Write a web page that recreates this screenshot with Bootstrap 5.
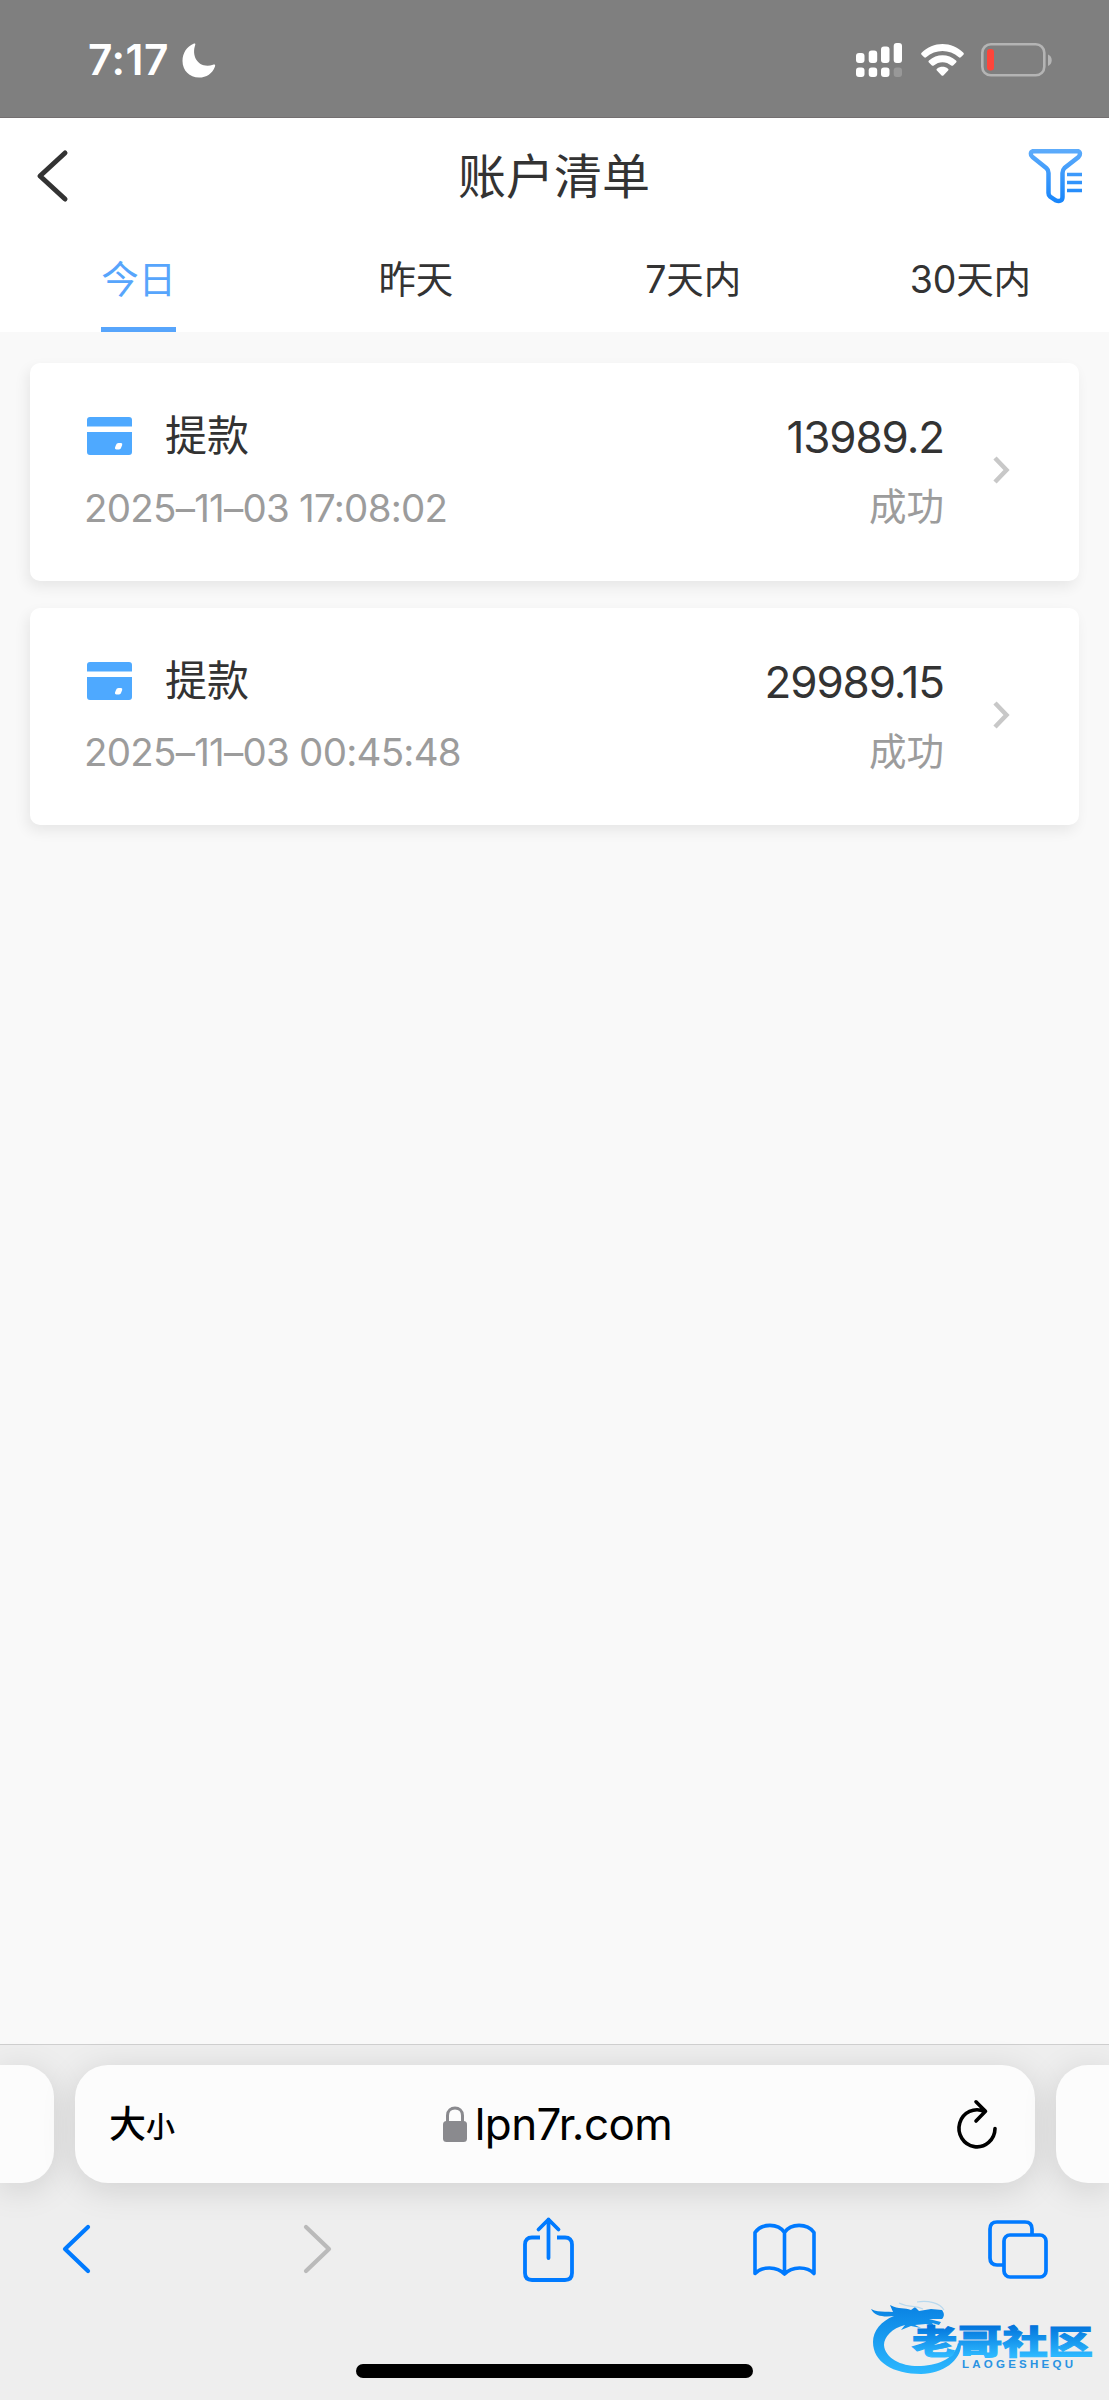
<!DOCTYPE html>
<html lang="zh-CN">
<head>
  <meta charset="utf-8">
  <title>账户清单</title>
  <link href="https://cdn.jsdelivr.net/npm/bootstrap@5.3.3/dist/css/bootstrap.min.css" rel="stylesheet">
  <style>
    body {
      height: 2400px;
      overflow: hidden;
      background: #f9f9f9;
      color: #333;
      font-family: Inter, "Noto Sans CJK SC", sans-serif;
      line-height: 1;
    }
    svg { display: block; flex-shrink: 0; overflow: visible; }

    /* 狀態列 */
    .status-bar { height: 118px; background: #7f7f7f; border-bottom: 1px solid #736f70; padding: 3px 57px 0 88px; }
    .clock { font-size: 42.5px; font-weight: 600; letter-spacing: 0.5px; padding-top: 1px; }
    .moon { margin-left: 13px; }

    /* 標題與頁籤 */
    .title-bar { height: 116px; padding: 0 27px 0 37px; }
    .title-text { font-size: 48px; padding: 1px 0 0 11px; }
    .day-tabs { height: 98px; font-size: 37.5px; }
    .day-tabs .nav-link { padding: 0; color: #333; height: 98px; letter-spacing: -0.2px; }
    .day-tabs .nav-link.active { color: #57a5fc; }
    .day-tabs .nav-link span { height: 98px; line-height: 91px; border-bottom: 5px solid transparent; }
    .day-tabs .nav-link.active span { border-color: #57a5fc; }

    /* 紀錄卡片 */
    .record-list { padding: 31px 30px 0; gap: 27px; }
    .record {
      height: 217.5px;
      border: 0;
      border-radius: 10px;
      padding: 48px 69px 0 54px;
      box-shadow: -3px 6px 14px rgba(0, 0, 0, .075);
    }
    .record-type { font-size: 42px; height: 50px; }
    .record-time { font-size: 38.5px; height: 48px; color: #9c9c9c; letter-spacing: -0.75px; }
    .record-amount { font-size: 44px; height: 52px; letter-spacing: -1.1px; }
    .record-state { font-size: 37.5px; height: 48px; color: #9c9c9c; margin-top: 20px; }
    .record-time { margin-top: 23px; }
    .record-arrow { margin: 45px 0 0 48px; }

    /* 瀏覽器工具列 */
    .browser-bar { height: 356px; background: #eee; border-top: 1px solid #cfcfcf; }
    .address-row { padding-top: 20px; gap: 21px; }
    .pill { height: 118px; background: #fcfcfc; box-shadow: 0 6px 34px rgba(0, 0, 0, .13); }
    .pill-left { width: 54px; border-radius: 0 32px 32px 0; }
    .pill-right { width: 53px; border-radius: 32px 0 0 32px; }
    .pill-main { border-radius: 33px; padding: 0 38px 0 34px; color: #000; }
    .text-size { font-size: 37px; font-weight: 500; }
    .text-size span { font-size: 29px; }
    .site { font-size: 44px; letter-spacing: -0.6px; padding-right: 17px; }
    .tool-row { height: 132px; padding: 0 59px 0 44px; }
    .tool-cell { width: 64px; }
    .tool-forward { width: 72px; padding-left: 8px; }
    .tool-share { padding-right: 5px; }
    .home-bar { width: 397px; height: 14px; border-radius: 7px; background: #000; margin-top: 49px; }
    .watermark { right: 16px; bottom: 24px; }
  </style>
</head>
<body class="d-flex flex-column position-relative">

  <div class="status-bar d-flex align-items-center justify-content-between text-white">
    <div class="d-flex align-items-center">
      <span class="clock">7:17</span>
      <svg class="moon" width="34" height="35" viewBox="0 0 34 35"><path fill="#fff" d="M11.500.8C13 .2 13.700.7 13.200 2 9 14 17 26 31 21.800c1.600-.5 2.600 0 2 1.700C30.500 30.500 24.500 34.600 17 34.600 7.500 34.600.5 27.500.5 18 .5 10 5 3.400 11.500.8Z"/></svg>
    </div>
    <div class="d-flex align-items-center">
      <svg width="46" height="34" viewBox="0 0 46 34" fill="#fff">
        <rect x="0" y="10" width="8.500" height="10" rx="3"/><rect x="12.700" y="7.500" width="8.500" height="12.500" rx="3"/>
        <rect x="25" y="3.500" width="8.500" height="16.500" rx="3"/><rect x="37.700" y="0" width="8.300" height="20" rx="3"/>
        <rect x="0" y="24.500" width="8.500" height="9.500" rx="3"/><rect x="12.700" y="24.500" width="8.500" height="9.500" rx="3"/>
        <rect x="25" y="24.500" width="8.500" height="9.500" rx="3"/><rect x="37.700" y="24.500" width="8.300" height="9.500" rx="3" opacity=".2"/>
      </svg>
      <svg style="margin-left:19px" width="43" height="33" viewBox="0 0 43 33" fill="#fff">
        <path d="M.6 8.800C12-2.900 31-2.900 42.400 8.800c.6.6.6 1.300 0 1.900L39.800 13.300c-.6.600-1.300.6-1.900 0C28.500 4.900 14.500 4.900 5.100 13.300c-.6.600-1.300.6-1.900 0L.6 10.700c-.6-.6-.6-1.300 0-1.900Z"/>
        <path d="M8 16.600c7.700-7 19.300-7 27 0 .7.600.7 1.200.1 1.900l-3 2.900c-.6.600-1.200.600-1.900.1-5-4.500-12.400-4.500-17.400 0-.7.500-1.300.5-1.900-.1l-3-2.900c-.6-.7-.6-1.300.1-1.900Z"/>
        <path d="M16 24.700c3.200-2.600 7.800-2.600 11 0 .7.600.7 1.200.1 1.800l-4.700 4.900c-.6.600-1.200.6-1.800 0l-4.700-4.900c-.6-.6-.6-1.200.1-1.800Z"/>
      </svg>
      <svg style="margin-left:17px" width="71" height="34" viewBox="0 0 71 34">
        <rect x="1.300" y="1.300" width="62" height="31" rx="8.500" fill="none" stroke="#b4b4b4" stroke-width="2.600"/>
        <rect x="6" y="6" width="7" height="21.500" rx="3" fill="#ff453a"/>
        <path d="M67 11.500c5 2 5 9.500 0 11.500Z" fill="#b4b4b4"/>
      </svg>
    </div>
  </div>

  <header class="bg-white">
    <div class="title-bar d-flex align-items-center justify-content-between">
      <svg width="31" height="52" viewBox="0 0 31 52"><path d="M28 3 3 26 28 49" fill="none" stroke="#333" stroke-width="5" stroke-linecap="round" stroke-linejoin="round"/></svg>
      <span class="title-text">账户清单</span>
      <svg width="53" height="54" viewBox="0 0 53 54" fill="none" stroke="url(#funnel)" stroke-width="4.500">
        <defs><linearGradient id="funnel" gradientUnits="userSpaceOnUse" x1="0" y1="0" x2="0" y2="54"><stop offset="0" stop-color="#5eacfb"/><stop offset="1" stop-color="#1785fb"/></linearGradient></defs>
        <path d="M4 2.200H49C51.500 3 51.500 6 49.500 8L35.500 19C34 20.500 33.500 21.500 33.500 24V48C33.500 51.500 30.500 53 27 51.500L21 47.500C20 46.500 19.500 45.500 19.500 44V24C19.500 21.500 19 20.500 17.500 19.200L3.500 8C1 6 1.500 3 4 2.200Z"/>
        <path d="M38 25.500H53M38 33.500H53M38 41.500H53" stroke-width="3.500"/>
      </svg>
    </div>
    <ul class="nav nav-fill day-tabs row g-0 text-center">
      <li class="col-3"><a class="nav-link active"><span class="d-inline-block">今日</span></a></li>
      <li class="col-3"><a class="nav-link"><span class="d-inline-block">昨天</span></a></li>
      <li class="col-3"><a class="nav-link"><span class="d-inline-block">7天内</span></a></li>
      <li class="col-3"><a class="nav-link"><span class="d-inline-block">30天内</span></a></li>
    </ul>
  </header>

  <main class="record-list d-flex flex-column flex-grow-1">
    <div class="card record flex-row">
      <div class="flex-grow-1">
        <div class="record-type d-flex align-items-center">
          <svg class="me-4" width="49" height="38" viewBox="0 0 49 38"><path fill="#4ea9ff" d="M6 0H45Q48 0 48 3V9.500H3V3Q3 0 6 0ZM3 15H48V35Q48 38 45 38H6Q3 38 3 35ZM34.500 26Q32.500 26 32 28L31 30.500Q30.500 32.500 32.500 32.500H35Q36.700 32.500 37.200 30.500L38.200 28Q38.700 26 37 26Z" fill-rule="evenodd"/></svg>
          <span class="ps-2">提款</span>
        </div>
        <div class="record-time d-flex align-items-center">2025–11–03 17:08:02</div>
      </div>
      <div class="text-end">
        <div class="record-amount d-flex align-items-center justify-content-end">13989.2</div>
        <div class="record-state d-flex align-items-center justify-content-end">成功</div>
      </div>
      <svg class="record-arrow" width="18" height="28" viewBox="0 0 18 28"><path d="M3 2 14.500 14 3 26" fill="none" stroke="#c8c8c8" stroke-width="4.500"/></svg>
    </div>

    <div class="card record flex-row">
      <div class="flex-grow-1">
        <div class="record-type d-flex align-items-center">
          <svg class="me-4" width="49" height="38" viewBox="0 0 49 38"><path fill="#4ea9ff" d="M6 0H45Q48 0 48 3V9.500H3V3Q3 0 6 0ZM3 15H48V35Q48 38 45 38H6Q3 38 3 35ZM34.500 26Q32.500 26 32 28L31 30.500Q30.500 32.500 32.500 32.500H35Q36.700 32.500 37.200 30.500L38.200 28Q38.700 26 37 26Z" fill-rule="evenodd"/></svg>
          <span class="ps-2">提款</span>
        </div>
        <div class="record-time d-flex align-items-center">2025–11–03 00:45:48</div>
      </div>
      <div class="text-end">
        <div class="record-amount d-flex align-items-center justify-content-end">29989.15</div>
        <div class="record-state d-flex align-items-center justify-content-end">成功</div>
      </div>
      <svg class="record-arrow" width="18" height="28" viewBox="0 0 18 28"><path d="M3 2 14.500 14 3 26" fill="none" stroke="#c8c8c8" stroke-width="4.500"/></svg>
    </div>
  </main>

  <footer class="browser-bar">
    <div class="address-row d-flex">
      <div class="pill pill-left"></div>
      <div class="pill pill-main flex-grow-1 d-flex align-items-center justify-content-between">
        <div class="text-size">大<span>小</span></div>
        <div class="site d-flex align-items-center">
          <svg width="24" height="36" viewBox="0 0 24 36"><rect y="15" width="24" height="21" rx="3.500" fill="#8a8a8e"/><path d="M4.500 16V9.500C4.500-.5 19.500-.5 19.500 9.500V16" fill="none" stroke="#8a8a8e" stroke-width="3"/></svg>
          <span class="ps-2">lpn7r.com</span>
        </div>
        <svg width="40" height="48" viewBox="0 0 40 48" fill="none" stroke="#000" stroke-width="3.600" stroke-linecap="round" stroke-linejoin="round"><path d="M38 28.500A18 18.500 0 1 1 27.500 11.500M19 1.800 28.500 11.200 19 21"/></svg>
      </div>
      <div class="pill pill-right"></div>
    </div>

    <div class="tool-row d-flex align-items-center justify-content-between">
      <div class="tool-cell d-flex justify-content-center">
        <svg width="30" height="50" viewBox="0 0 30 50"><path d="M27 3 4 25 27 47" fill="none" stroke="#007aff" stroke-width="4.200" stroke-linecap="round" stroke-linejoin="round"/></svg>
      </div>
      <div class="tool-cell tool-forward d-flex justify-content-center">
        <svg width="30" height="50" viewBox="0 0 30 50"><path d="M3 3 26 25 3 47" fill="none" stroke="#bababa" stroke-width="4.200" stroke-linecap="round" stroke-linejoin="round"/></svg>
      </div>
      <div class="tool-cell tool-share d-flex justify-content-center">
        <svg width="51" height="65" viewBox="0 0 51 65" fill="none" stroke="#007aff" stroke-width="3.800" stroke-linejoin="round"><path d="M17 20.500H9Q2 20.500 2 27.500V56Q2 63 9 63H42Q49 63 49 56V27.500Q49 20.500 42 20.500H34"/><path d="M25.500 41V2.500M15.500 12.500 25.500 2.500 35.500 12.500" stroke-linecap="round"/></svg>
      </div>
      <div class="tool-cell d-flex justify-content-center">
        <svg width="63" height="53" viewBox="0 0 63 53" fill="none" stroke="#007aff" stroke-width="3.600" stroke-linecap="round" stroke-linejoin="round"><path d="M31.500 9.500C25 0 9 0 2 9.500V50.500C9 43 24 43 31.500 51C39 43 54 43 61 50.500V9.500C54 0 38 0 31.500 9.500ZM31.500 9.500V51"/></svg>
      </div>
      <div class="tool-cell d-flex justify-content-center">
        <svg width="60" height="59" viewBox="0 0 60 59" fill="none" stroke="#007aff" stroke-width="3.700"><rect x="16" y="15" width="42" height="42" rx="6"/><path d="M16 45H9Q2 45 2 38V9Q2 2 9 2H37Q44 2 44 9V15"/></svg>
      </div>
    </div>
    <div class="home-bar mx-auto"></div>
  </footer>

  <svg class="watermark position-absolute" width="222" height="78" viewBox="0 0 222 78">
    <defs>
      <linearGradient id="ring" gradientUnits="userSpaceOnUse" x1="0" y1="10" x2="0" y2="76"><stop offset="0" stop-color="#0a84e4"/><stop offset="1" stop-color="#2cb8ff"/></linearGradient>
      <linearGradient id="word" gradientUnits="userSpaceOnUse" x1="0" y1="28" x2="0" y2="58"><stop offset="0" stop-color="#0274dc"/><stop offset="1" stop-color="#2db9ff"/></linearGradient>
    </defs>
    <path fill="url(#ring)" d="M0 11C7 15 13 13 22 14L19 7C28 12 34 9 40 12L44 9 48 13 60 11 71 12C74 16 73 19 71 21L58 21 70 24 68 27 61 25 64 29 55 26 44 27 50 30 40 28 30 32 34 27C21 30 13 39 13 47C14 61 32 69 50 68C69 67 84 60 87 45L90 47C90 62 72 76 50 76C22 76 2 64 2 44C2 33 10 23 23 18C14 19 4 19 0 11Z"/>
    <path d="M28 5C38 10 44 7 52 11M46 4C57 2 69 5 73 12" fill="none" stroke="#b9d9ee" stroke-width="1.200"/>
    <text x="41" y="55.500" font-family="Noto Sans CJK SC" font-size="33" font-weight="900" fill="url(#word)" stroke="url(#word)" stroke-width="1" textLength="181" lengthAdjust="spacingAndGlyphs">老哥社区</text>
    <text x="91" y="69.500" font-family="Liberation Sans" font-size="11.500" font-weight="700" fill="#2a93e2" textLength="111">LAOGESHEQU</text>
  </svg>

  <script src="https://cdn.jsdelivr.net/npm/bootstrap@5.3.3/dist/js/bootstrap.bundle.min.js"></script>
</body>
</html>
